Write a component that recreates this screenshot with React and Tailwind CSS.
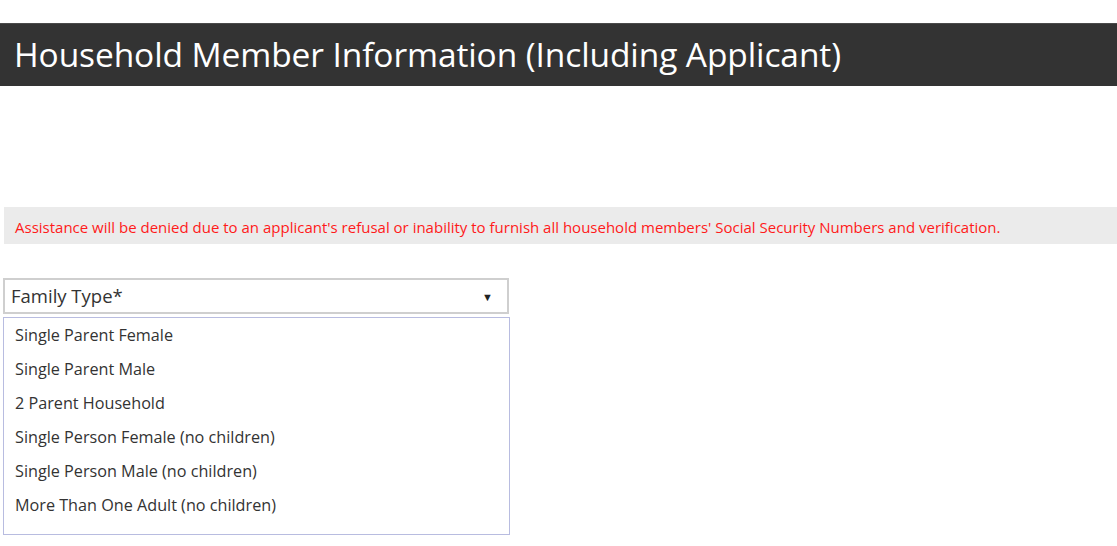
export default function App() {
  const items = [
    "Single Parent Female",
    "Single Parent Male",
    "2 Parent Household",
    "Single Person Female (no children)",
    "Single Person Male (no children)",
    "More Than One Adult (no children)",
  ];
  return (
    <div className="w-[1117px] h-[546px] bg-white overflow-hidden" style={{ fontFamily: '"Open Sans", "Noto Sans", sans-serif' }}>
      <div className="h-[23px]" />
      <div className="h-[63px] bg-[#333333] border-t border-[#4a4a4a] flex items-center pl-[14px]">
        <h1 className="text-[33.5px] text-white leading-none tracking-[-0.1px]">Household Member Information (Including Applicant)</h1>
      </div>
      <div className="h-[121px]" />
      <div className="ml-[4px] h-[37px] bg-[#ebebeb] flex items-center pl-[11px] pt-[4px]">
        <p className="text-[15px] text-[#ff1a1a]">Assistance will be denied due to an applicant's refusal or inability to furnish all household members' Social Security Numbers and verification.</p>
      </div>
      <div className="h-[34px]" />
      <div className="ml-[3px] w-[506px] h-[36px] border-2 border-[#cfcfcf] flex items-center justify-between pl-[6px] pr-[14px]">
        <span className="text-[18.5px] text-[#333] leading-none">Family Type*</span>
        <span className="text-[11px] text-[#222] leading-none">▼</span>
      </div>
      <div className="mt-[3px] ml-[3px] w-[507px] h-[218px] border border-[#b8bce0] pt-0 pl-[11px]">
        {items.map((t) => (
          <div key={t} className="h-[34px] flex items-center text-[16.2px] text-[#333]">{t}</div>
        ))}
      </div>
    </div>
  );
}
